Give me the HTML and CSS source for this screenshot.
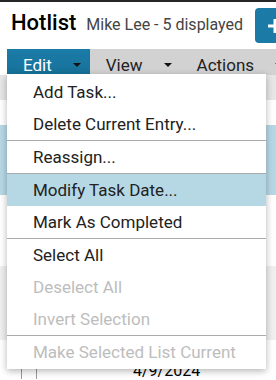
FILE: index.html
```html
<!DOCTYPE html>
<html>
<head>
<meta charset="utf-8">
<link rel="stylesheet" href="styles.css">
</head>
<body>
<div class="page">
  <header class="header">
    <div class="titles">
      <h1 class="title">Hotlist</h1>
      <span class="subtitle">Mike Lee - 5 displayed</span>
    </div>
    <button class="add-btn" aria-label="Add">
      <svg width="16" height="16" viewBox="0 0 16 16"><path d="M8 1v14M1 8h14" stroke="#fff" stroke-width="3" fill="none"/></svg>
    </button>
  </header>

  <nav class="menubar">
    <div class="mb-item active">Edit<svg class="caret" width="8" height="4" viewBox="0 0 8 4"><path d="M0 0h8L4 4z"/></svg></div>
    <div class="mb-item">View<svg class="caret" width="8" height="4" viewBox="0 0 8 4"><path d="M0 0h8L4 4z"/></svg></div>
    <div class="mb-item">Actions<svg class="caret" width="8" height="4" viewBox="0 0 8 4"><path d="M0 0h8L4 4z"/></svg></div>
  </nav>

  <div class="list">
    <div class="list-head"></div>
    <div class="row r1"></div>
    <div class="row r2 selected"></div>
    <div class="row r3"></div>
    <div class="row r4 alt"></div>
    <div class="row r5"><span class="check"></span><span class="date">4/9/2024</span></div>
  </div>

  <ul class="dropdown">
    <li class="dd-item">Add Task...</li>
    <li class="dd-item">Delete Current Entry...</li>
    <li class="dd-sep"></li>
    <li class="dd-item">Reassign...</li>
    <li class="dd-sep"></li>
    <li class="dd-item hover">Modify Task Date...</li>
    <li class="dd-item">Mark As Completed</li>
    <li class="dd-sep"></li>
    <li class="dd-item">Select All</li>
    <li class="dd-item disabled">Deselect All</li>
    <li class="dd-item disabled">Invert Selection</li>
    <li class="dd-sep"></li>
    <li class="dd-item disabled">Make Selected List Current</li>
  </ul>
</div>
</body>
</html>
```

FILE: styles.css
```css
html, body {
  margin: 0;
  padding: 0;
  overflow: hidden;
  background: #fff;
}
body {
  font-family: Roboto, "Liberation Sans", sans-serif;
  color: #222;
  width: 276px;
  height: 380px;
}
.page {
  position: relative;
  width: 276px;
  height: 380px;
  border-top: 2px solid #262626;
  box-sizing: border-box;
  overflow: hidden;
}
.header {
  display: flex;
  align-items: flex-start;
  height: 47px;
  box-sizing: border-box;
  padding: 6px 0 0 11px;
  white-space: nowrap;
  overflow: hidden;
}
.titles {
  display: flex;
  align-items: baseline;
  gap: 10px;
  margin-top: 2px;
  flex-shrink: 0;
}
.title {
  margin: 0;
  font-size: 22px;
  font-weight: 500;
  line-height: 26px;
  color: #000;
}
.subtitle {
  font-size: 16px;
  color: #444;
}
.add-btn {
  flex-shrink: 0;
  margin-left: 12px;
  width: 40px;
  height: 35px;
  border: 0;
  border-radius: 4px;
  background: #1b7aa6;
  display: flex;
  align-items: center;
  justify-content: center;
  padding: 0;
}
.menubar {
  display: flex;
  margin-left: 7px;
  height: 26px;
  background: #d2d2d2;
  white-space: nowrap;
  overflow: hidden;
}
.mb-item {
  display: flex;
  align-items: flex-start;
  flex-shrink: 0;
  height: 26px;
  box-sizing: border-box;
  padding: 6px 9px 0 16px;
  line-height: 20px;
  font-size: 17px;
  color: #222;
}
.mb-item .caret {
  margin-left: 21px;
  margin-top: 8px;
  fill: #111;
}
.mb-item.active {
  background: linear-gradient(#1b7ca8, #177199);
  color: #fff;
}
.list-head {
  height: 25px;
  background: #e6e6e6;
}
.row { position: relative; }
.r1 { height: 25px; }
.r2 { height: 70px; }
.r3 { height: 71px; }
.r4 { height: 74px; }
.r5 { height: 40px; }
.selected { background: #b6d8e5; }
.alt { background: #efefef; }
.check {
  position: absolute;
  left: 21px;
  top: 24px;
  width: 14px;
  height: 14px;
  border: 1px solid #999;
  border-bottom: 0;
}
.date {
  position: absolute;
  left: 133px;
  top: 22px;
  font-size: 16px;
  line-height: 18px;
  color: #000;
}
.dropdown {
  position: absolute;
  top: 72px;
  left: 7px;
  width: 259px;
  margin: 0;
  padding: 2px 0 1px;
  list-style: none;
  background: #fff;
  box-shadow: 0 2px 7px rgba(0,0,0,0.3);
  z-index: 2;
}
.dd-item {
  height: 32px;
  box-sizing: border-box;
  padding: 4px 0 4px 26px;
  line-height: 24px;
  font-size: 17px;
  color: #222;
  white-space: nowrap;
}
.dd-item.hover {
  background: #b6d8e5;
}
.dd-item.disabled {
  color: #bdbdbd;
}
.dd-sep {
  height: 1px;
  background: #aaaaaa;
}
```
